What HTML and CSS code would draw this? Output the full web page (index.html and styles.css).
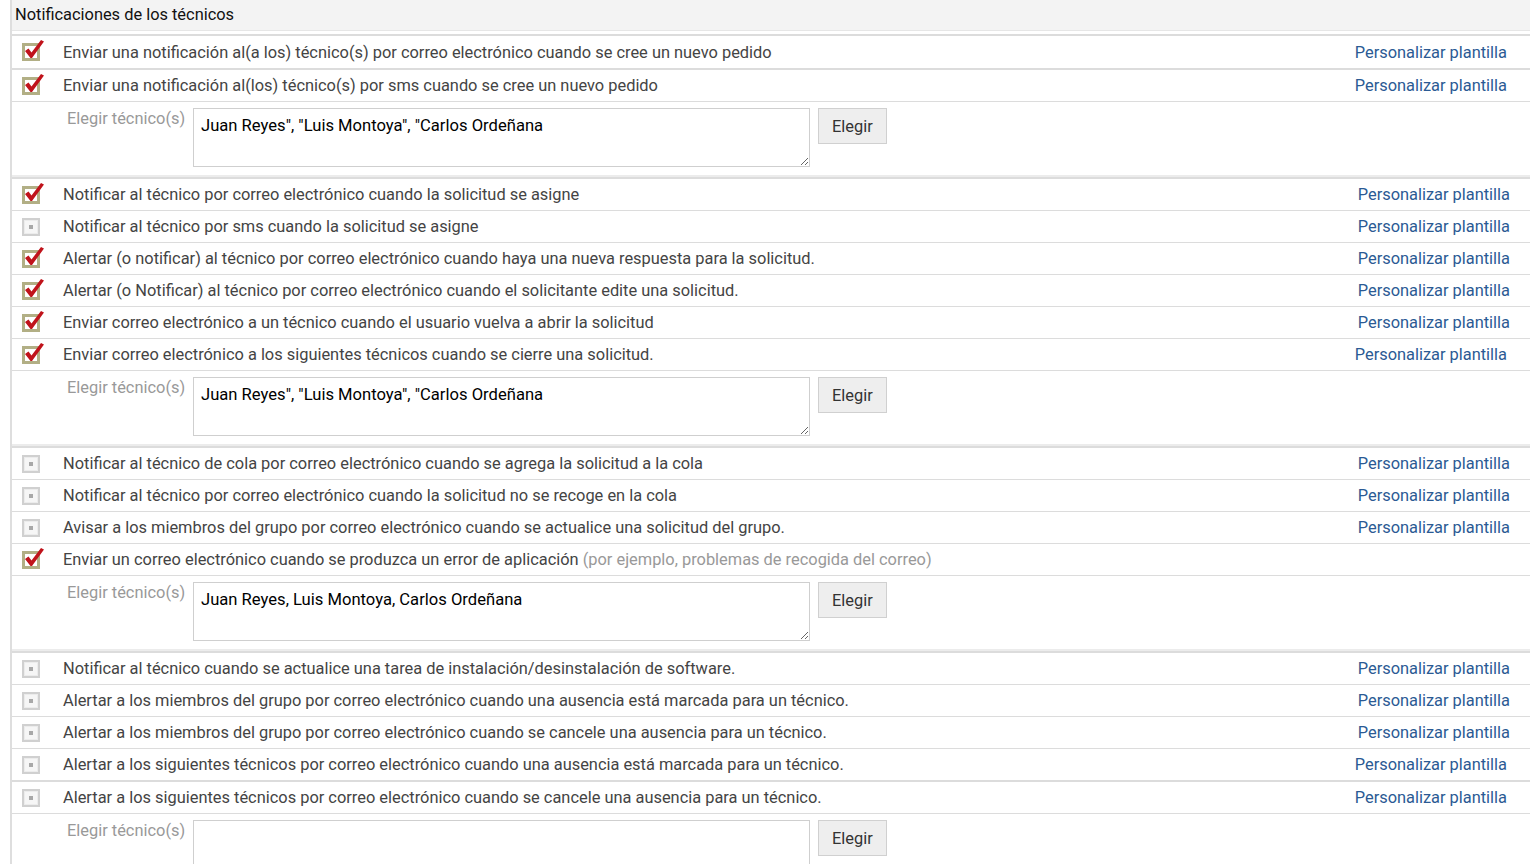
FILE: index.html
```html
<!DOCTYPE html>
<html lang="es">
<head>
    <meta charset="UTF-8">
    <title>Notificaciones de los técnicos</title>
    <link rel="stylesheet" href="styles.css">
</head>
<body>

<div class="panel">
    <div class="panel-title">Notificaciones de los técnicos</div>

    <div class="row row-wide">
        <span class="chk on"></span>
        <span class="label">Enviar una notificación al(a los) técnico(s) por correo electrónico cuando se cree un nuevo pedido</span>
        <a href="#" class="tpl">Personalizar plantilla</a>
    </div>
    <div class="row row-wide">
        <span class="chk on"></span>
        <span class="label">Enviar una notificación al(los) técnico(s) por sms cuando se cree un nuevo pedido</span>
        <a href="#" class="tpl">Personalizar plantilla</a>
    </div>
    <div class="picker">
        <span class="picker-label">Elegir técnico(s)</span>
        <textarea>Juan Reyes", "Luis Montoya", "Carlos Ordeñana</textarea>
        <button type="button">Elegir</button>
    </div>

    <div class="row">
        <span class="chk on"></span>
        <span class="label">Notificar al técnico por correo electrónico cuando la solicitud se asigne</span>
        <a href="#" class="tpl">Personalizar plantilla</a>
    </div>
    <div class="row">
        <span class="chk"></span>
        <span class="label">Notificar al técnico por sms cuando la solicitud se asigne</span>
        <a href="#" class="tpl">Personalizar plantilla</a>
    </div>
    <div class="row">
        <span class="chk on"></span>
        <span class="label">Alertar (o notificar) al técnico por correo electrónico cuando haya una nueva respuesta para la solicitud.</span>
        <a href="#" class="tpl">Personalizar plantilla</a>
    </div>
    <div class="row">
        <span class="chk on"></span>
        <span class="label">Alertar (o Notificar) al técnico por correo electrónico cuando el solicitante edite una solicitud.</span>
        <a href="#" class="tpl">Personalizar plantilla</a>
    </div>
    <div class="row">
        <span class="chk on"></span>
        <span class="label">Enviar correo electrónico a un técnico cuando el usuario vuelva a abrir la solicitud</span>
        <a href="#" class="tpl">Personalizar plantilla</a>
    </div>
    <div class="row row-wide">
        <span class="chk on"></span>
        <span class="label">Enviar correo electrónico a los siguientes técnicos cuando se cierre una solicitud.</span>
        <a href="#" class="tpl">Personalizar plantilla</a>
    </div>
    <div class="picker">
        <span class="picker-label">Elegir técnico(s)</span>
        <textarea>Juan Reyes", "Luis Montoya", "Carlos Ordeñana</textarea>
        <button type="button">Elegir</button>
    </div>

    <div class="row">
        <span class="chk"></span>
        <span class="label">Notificar al técnico de cola por correo electrónico cuando se agrega la solicitud a la cola</span>
        <a href="#" class="tpl">Personalizar plantilla</a>
    </div>
    <div class="row">
        <span class="chk"></span>
        <span class="label">Notificar al técnico por correo electrónico cuando la solicitud no se recoge en la cola</span>
        <a href="#" class="tpl">Personalizar plantilla</a>
    </div>
    <div class="row">
        <span class="chk"></span>
        <span class="label">Avisar a los miembros del grupo por correo electrónico cuando se actualice una solicitud del grupo.</span>
        <a href="#" class="tpl">Personalizar plantilla</a>
    </div>
    <div class="row">
        <span class="chk on"></span>
        <span class="label">Enviar un correo electrónico cuando se produzca un error de aplicación <span class="hint">(por ejemplo, problemas de recogida del correo)</span></span>
    </div>
    <div class="picker">
        <span class="picker-label">Elegir técnico(s)</span>
        <textarea>Juan Reyes, Luis Montoya, Carlos Ordeñana</textarea>
        <button type="button">Elegir</button>
    </div>

    <div class="row">
        <span class="chk"></span>
        <span class="label">Notificar al técnico cuando se actualice una tarea de instalación/desinstalación de software.</span>
        <a href="#" class="tpl">Personalizar plantilla</a>
    </div>
    <div class="row">
        <span class="chk"></span>
        <span class="label">Alertar a los miembros del grupo por correo electrónico cuando una ausencia está marcada para un técnico.</span>
        <a href="#" class="tpl">Personalizar plantilla</a>
    </div>
    <div class="row">
        <span class="chk"></span>
        <span class="label">Alertar a los miembros del grupo por correo electrónico cuando se cancele una ausencia para un técnico.</span>
        <a href="#" class="tpl">Personalizar plantilla</a>
    </div>
    <div class="row row-wide">
        <span class="chk"></span>
        <span class="label">Alertar a los siguientes técnicos por correo electrónico cuando una ausencia está marcada para un técnico.</span>
        <a href="#" class="tpl">Personalizar plantilla</a>
    </div>
    <div class="row row-wide">
        <span class="chk"></span>
        <span class="label">Alertar a los siguientes técnicos por correo electrónico cuando se cancele una ausencia para un técnico.</span>
        <a href="#" class="tpl">Personalizar plantilla</a>
    </div>
    <div class="picker">
        <span class="picker-label">Elegir técnico(s)</span>
        <textarea></textarea>
        <button type="button">Elegir</button>
    </div>
</div>

</body>
</html>
```

FILE: styles.css
```css
body {
    margin: 0;
    font-family: Roboto, "Liberation Sans", sans-serif;
    font-size: 16.4px;
    color: #444;
    background: #fff;
}

.panel {
    margin-left: 10px;
    border-left: 2px solid #dedede;
}

.panel-title {
    height: 30px;
    line-height: 29px;
    padding-left: 3px;
    color: #111;
    background: #f3f3f3;
    border-bottom: 1px solid #e6e6e6;
    margin-bottom: 3px;
}

.row {
    display: flex;
    align-items: center;
    height: 31px;
    padding-right: 20px;
    border-top: 2px solid #dcdcdc;
    margin-top: -1px;
}
.row + .row {
    border-top-width: 1px;
    margin-top: 0;
}
.row-wide {
    padding-right: 23px;
}
.row-wide + .row-wide {
    border-top-width: 2px;
}
.panel-title + .row {
    margin-top: 0;
    height: 32px;
}

.chk {
    width: 18px;
    height: 18px;
    margin-left: 10px;
    margin-right: 23px;
    box-sizing: border-box;
    border: 2px solid #d0d0d0;
    background: #f6f6f6;
    box-shadow: inset 0 0 0 1px #ececec;
    position: relative;
    flex: none;
}
.chk::after {
    content: "";
    position: absolute;
    left: 5px;
    top: 5px;
    width: 4px;
    height: 4px;
    background: #a8a8a8;
}
.chk.on {
    border: 3px solid #b2af85;
    background: #fff;
    box-shadow: none;
}
.chk.on::after {
    left: -1px;
    top: -6px;
    width: 20px;
    height: 19px;
    background: no-repeat url("data:image/svg+xml,%3Csvg xmlns='http://www.w3.org/2000/svg' viewBox='0 0 20 19'%3E%3Cpath d='M1 11 L4.5 8.5 L7.5 12.5 L17 0 L20 1.5 L8 18 L6.5 18 Z' fill='%23c0131b'/%3E%3C/svg%3E");
}

.label {
    flex: 1;
    white-space: nowrap;
}
.hint {
    color: #999;
}

.tpl {
    color: #2b5a94;
    text-decoration: none;
}

.picker {
    display: flex;
    align-items: flex-start;
    padding: 6px 0 8px;
    border-top: 1px solid #dcdcdc;
    border-bottom: 3px solid #ececec;
}
.picker-label {
    width: 181px;
    box-sizing: border-box;
    padding-left: 55px;
    padding-top: 1px;
    color: #999;
    white-space: nowrap;
}
.picker textarea {
    width: 617px;
    height: 59px;
    box-sizing: border-box;
    margin: 0;
    padding: 7px 7px;
    border: 1px solid #cfcfcf;
    font-family: Roboto, "Liberation Sans", sans-serif;
    font-size: 16.6px;
    color: #000;
}
.picker button {
    margin-left: 8px;
    height: 36px;
    padding: 0 13px;
    background: #eeeeee;
    border: 1px solid #d0d0d0;
    border-radius: 0;
    font-family: Roboto, "Liberation Sans", sans-serif;
    font-size: 16.4px;
    color: #333;
}
```
